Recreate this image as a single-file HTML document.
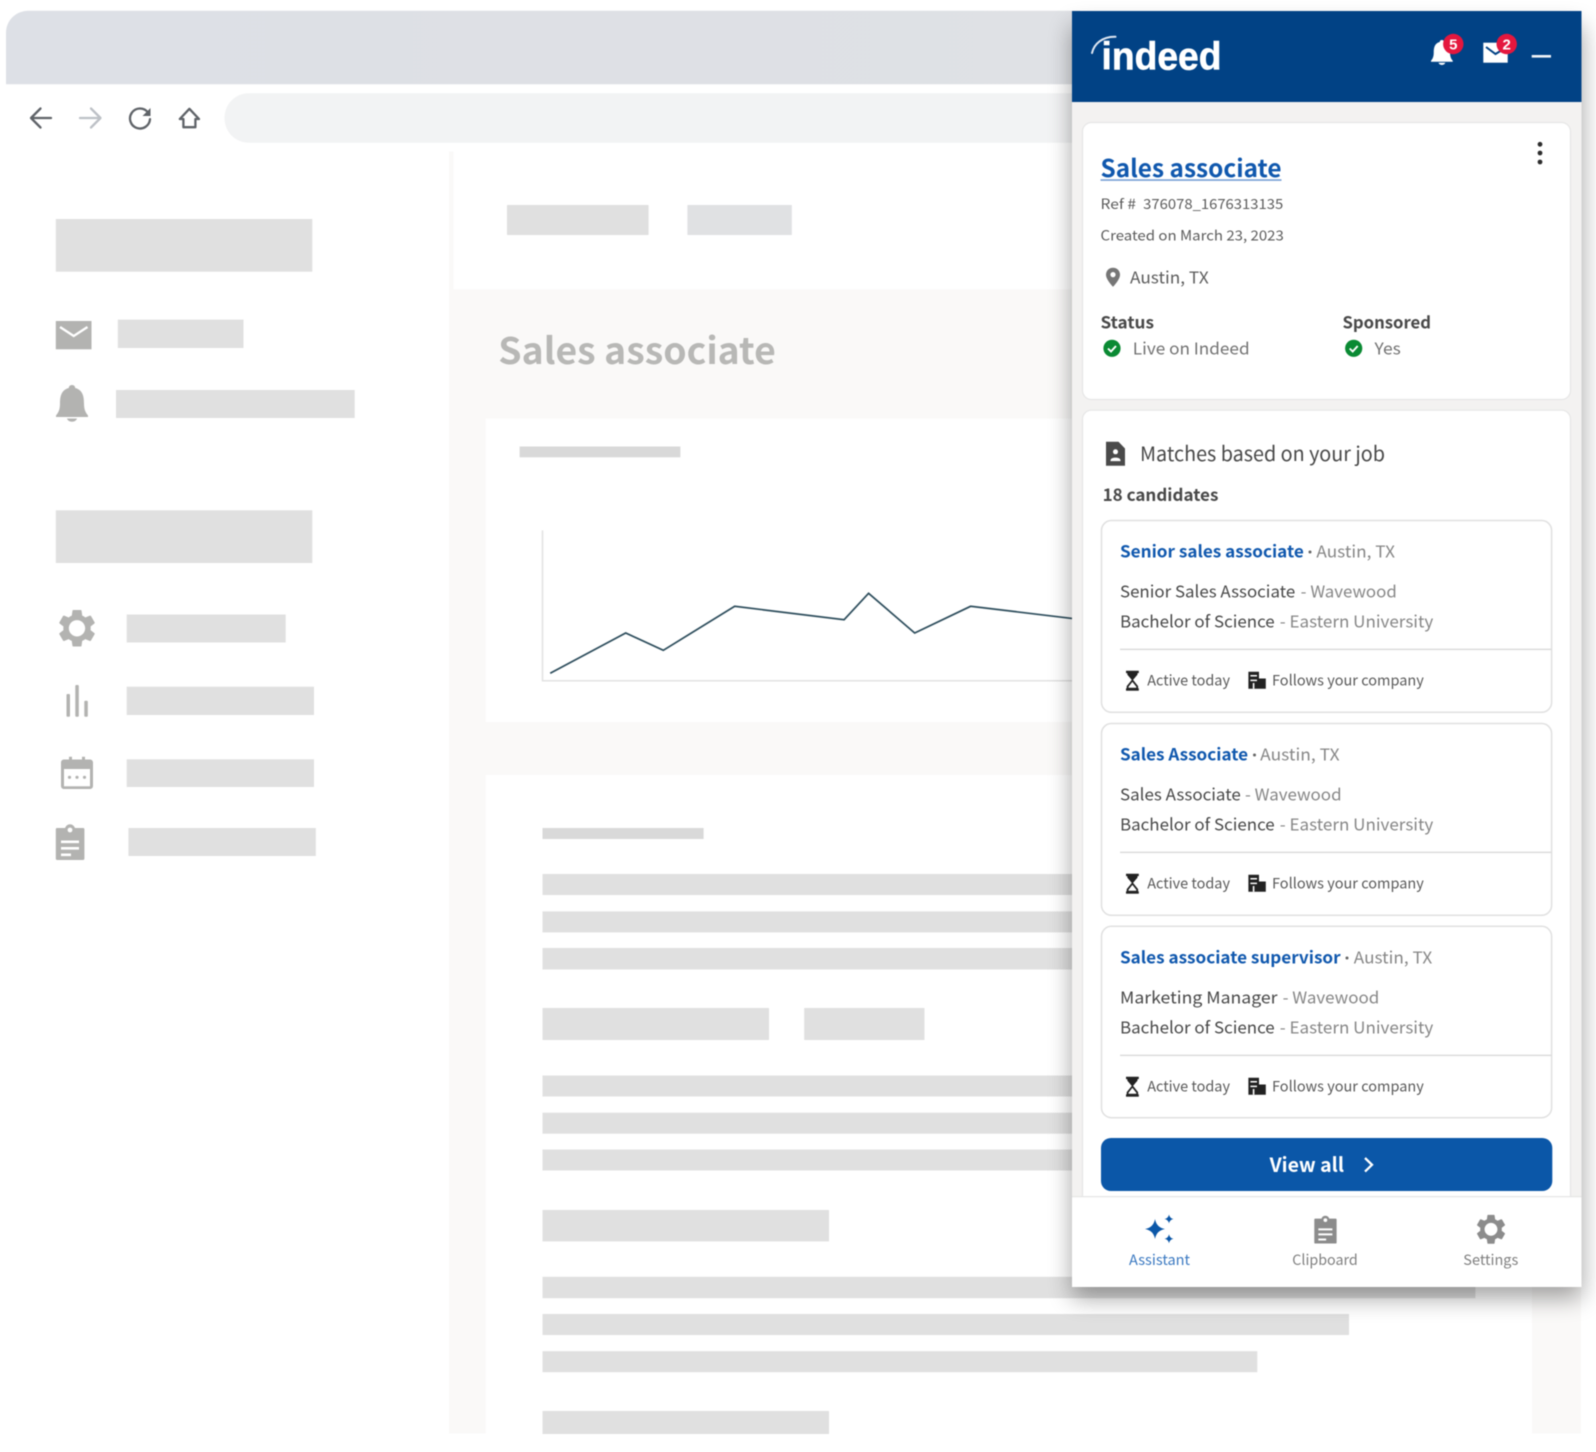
<!DOCTYPE html>
<html lang="en">
<head>
<meta charset="utf-8">
<title>Indeed assistant</title>
<style>
html,body{margin:0;padding:0;background:#fff;width:1596px;height:1452px;overflow:hidden}
svg{display:block;filter:blur(.5px)}
text{font-family:"Noto Sans CJK JP","Liberation Sans",sans-serif;white-space:pre}
.b{font-weight:700}
.k{fill:#484848}
.g{fill:#868686}
.l{fill:#1058ae;font-weight:700}
.s{fill:#5a5a5a;font-size:14.5px}
.m{font-size:16.5px}
</style>
</head>
<body>
<svg xmlns="http://www.w3.org/2000/svg" width="1596" height="1452" viewBox="0 0 1596 1452">
<defs>
<linearGradient id="tb" x1="0" x2="1" y1="0" y2="0"><stop offset="0" stop-color="#dde0e6"/><stop offset="1" stop-color="#dfe1e5"/></linearGradient>
<filter id="sh" x="-20%" y="-10%" width="140%" height="120%"><feGaussianBlur stdDeviation="12"/></filter>
<path id="gear" fill-rule="evenodd" d="M19.14 12.94c.04-.3.06-.61.06-.94 0-.32-.02-.64-.07-.94l2.03-1.58c.18-.14.23-.41.12-.61l-1.92-3.32c-.12-.22-.37-.29-.59-.22l-2.39.96c-.5-.38-1.03-.7-1.62-.94l-.36-2.54c-.04-.24-.24-.41-.48-.41h-3.84c-.24 0-.43.17-.47.41l-.36 2.54c-.59.24-1.13.57-1.62.94l-2.39-.96c-.22-.08-.47 0-.59.22L2.74 8.87c-.12.21-.08.47.12.61l2.03 1.58c-.05.3-.09.63-.09.94s.02.64.07.94l-2.03 1.58c-.18.14-.23.41-.12.61l1.92 3.32c.12.22.37.29.59.22l2.39-.96c.5.38 1.03.7 1.62.94l.36 2.54c.05.24.24.41.48.41h3.84c.24 0 .44-.17.47-.41l.36-2.54c.59-.24 1.13-.56 1.62-.94l2.39.96c.22.08.47 0 .59-.22l1.92-3.32c.12-.22.07-.47-.12-.61l-2.01-1.58zM12 16.3c-2.37 0-4.3-1.93-4.3-4.3s1.93-4.3 4.3-4.3 4.3 1.93 4.3 4.3-1.93 4.3-4.3 4.3z"/>
<g id="bell"><path d="M72 385c-2 0-3.2 1.4-3.2 3C61 390 60 397 60 403.5c0 6-1.6 9.2-4 12v1.5h32v-1.5c-2.4-2.8-4-6-4-12 0-6.500-1-13.500-8.800-15.500 0-1.600-1.200-3-3.200-3z"/><path d="M67 418.500h10c-.6 2-2.600 3.200-5 3.200s-4.400-1.200-5-3.200z"/></g>
<g id="clip"><rect x="55.800" y="828" width="28.600" height="32" rx="1.200"/><circle cx="70" cy="829.500" r="5.200"/><circle cx="70" cy="830" r="2.400" fill="#fff"/><path d="M61 840.500h18v2.600H61zM61 847h18v2.600H61zM61 853.500h10v2.600H61z" fill="#fff"/></g>
<g id="foot"><path d="M1126 670.700h12.800v2.400h-1.300v1.500l-5.100 6-5.100-6v-1.500H1126z" fill="#222"/><path d="M1132.400 680.500l-4.800 6v2.200h9.600v-2.200z" fill="none" stroke="#222" stroke-width="1.800"/><path d="M1126 688.300h12.800v2.400H1126z" fill="#222"/><path d="M1248.400 671.800h10.600v6.700h6.800v10.200h-17.400z" fill="#222"/><path d="M1250.400 675h6.600v1.500h-6.600zM1250.400 679.600h6.600v1.500h-6.600zM1252.800 683h1.600v5.700h-1.600z" fill="#fff"/></g>
</defs>

<!-- browser chrome -->
<path d="M6 84.300V33C6 20 16 10.700 29 10.700H1080V84.300z" fill="url(#tb)"/>
<path d="M249 93.300H1080V142.700H249c-14 0-24.500-11-24.500-24.700S235 93.300 249 93.300z" fill="#f2f3f4"/>
<g fill="none" stroke-width="2.300" stroke-linecap="round" stroke-linejoin="round">
<path d="M51 118H31.500M40.500 108.500L31 118l9.500 9.500" stroke="#5f6368"/>
<path d="M80 118h20M91 108.500l9.500 9.500-9.500 9.500" stroke="#bdc1c6"/>
<path d="M147.800 112.200a10 10 0 1 0 2.200 7" stroke="#5f6368"/>
<path d="M189.400 108.800l9.600 10.200h-3.600v8.200h-12v-8.200h-3.600z" stroke="#5f6368"/>
</g>
<path d="M150.500 108v8h-8z" fill="#5f6368"/>

<!-- main background -->
<rect x="449" y="151.500" width="1132" height="1282" fill="#faf9f8"/>
<rect x="453.500" y="151.500" width="1128" height="137.800" fill="#fff"/>
<rect x="485.700" y="418.600" width="1046.300" height="303.400" fill="#fff"/>
<rect x="485.700" y="775" width="1046.300" height="659" fill="#fff"/>

<!-- sidebar -->
<g fill="#e0e0e0">
<rect x="55.800" y="219" width="256.500" height="52.700"/>
<rect x="117.800" y="319.600" width="125.700" height="28.400"/>
<rect x="116" y="390" width="238.700" height="28"/>
<rect x="55.800" y="510.300" width="256.500" height="52.700"/>
<rect x="126.700" y="614.500" width="159" height="28"/>
<rect x="126.700" y="686.700" width="187.300" height="28.300"/>
<rect x="126.700" y="759.300" width="187.300" height="27.700"/>
<rect x="128.400" y="828" width="187.400" height="28"/>
</g>
<g fill="#b3b3b1">
<rect x="55.800" y="321" width="35.700" height="28.300"/>
<use href="#bell"/>
<use href="#gear" transform="translate(77 628.300) scale(1.900) translate(-12 -12)"/>
<rect x="66.500" y="694" width="3.500" height="22.700" rx="1"/>
<rect x="75.300" y="685" width="3.500" height="31.700" rx="1"/>
<rect x="84.300" y="700.700" width="3.500" height="16" rx="1"/>
<path d="M64 759.500h5v-2.800h3v2.800h10v-2.800h3v2.800h5c1.700 0 3 1.300 3 3V786c0 1.700-1.300 3-3 3H64c-1.700 0-3-1.300-3-3v-23.500c0-1.700 1.300-3 3-3z"/>
<use href="#clip"/>
</g>
<path d="M60 327l13.700 9 13.800-9" fill="none" stroke="#fff" stroke-width="2.300"/>
<rect x="64" y="769" width="26" height="17.300" fill="#fff"/>
<g fill="#b3b3b1"><circle cx="69.500" cy="777.300" r="1.600"/><circle cx="77" cy="777.300" r="1.600"/><circle cx="84.500" cy="777.300" r="1.600"/></g>

<!-- main content -->
<rect x="507" y="205" width="141.600" height="30" fill="#e0e0e0"/>
<rect x="687.400" y="205" width="104.400" height="30" fill="#e0e1e3"/>
<text x="498.300" y="364" font-size="36.500" class="b" fill="#b8b8b6" textLength="277.500" lengthAdjust="spacingAndGlyphs">Sales associate</text>
<rect x="519.600" y="446.500" width="160.800" height="10.800" fill="#d9d9d9"/>
<path d="M542.500 530.400V680.800H1080" fill="none" stroke="#e2e2e2" stroke-width="1.500"/>
<polyline points="550.200,673.300 625.700,633 663.300,650.300 734.700,606.300 844.100,619.700 868.600,593.300 914.700,633 970.600,606.300 1075,618.800" fill="none" stroke="#2d4d5c" stroke-width="1.700"/>
<g fill="#e0e0e0">
<rect x="542.500" y="828" width="161.100" height="11" fill="#d9d9d9"/>
<rect x="542.500" y="874" width="540" height="21"/>
<rect x="542.500" y="911.400" width="540" height="21"/>
<rect x="542.500" y="948" width="540" height="21.500"/>
<rect x="542.500" y="1008" width="226.500" height="32"/>
<rect x="804.200" y="1008" width="120.300" height="32"/>
<rect x="542.500" y="1075.500" width="540" height="21"/>
<rect x="542.500" y="1112.700" width="540" height="21"/>
<rect x="542.500" y="1149.500" width="540" height="21"/>
<rect x="542.500" y="1210" width="286.500" height="31.400"/>
<rect x="542.500" y="1276.800" width="932.900" height="21.400"/>
<rect x="542.500" y="1314" width="806.500" height="21"/>
<rect x="542.500" y="1351.200" width="714.800" height="21"/>
<rect x="542.500" y="1411" width="286.500" height="23"/>
</g>

<!-- panel -->
<rect x="1072" y="26" width="510" height="1272" fill="#000" opacity=".36" filter="url(#sh)"/>
<rect x="1072" y="11" width="509.500" height="1276" fill="#f3f2f1"/>
<rect x="1072" y="11" width="509.500" height="91" fill="#014285"/>
<text x="1101.500" y="69.300" font-size="39" fill="#fff" stroke="#fff" stroke-width=".6" style="font-family:'Liberation Sans',sans-serif;font-weight:700" textLength="120" lengthAdjust="spacingAndGlyphs">indeed</text>
<path d="M1092 53c2-9 10-16.500 23.500-16.200" fill="none" stroke="#dfe7f2" stroke-width="2" stroke-linecap="round"/>

<g transform="translate(1431 40) scale(.68) translate(-56 -385)" fill="#fff"><use href="#bell"/></g>
<circle cx="1453.300" cy="44" r="10.200" fill="#e4173e"/>
<text x="1453.300" y="49.300" font-size="15" text-anchor="middle" fill="#fff" style="font-family:'Liberation Sans',sans-serif;font-weight:700">5</text>
<rect x="1483.300" y="42.700" width="24.400" height="20" fill="#fff"/>
<path d="M1486 47l9.500 7 9-5.500" fill="none" stroke="#014285" stroke-width="2"/>
<circle cx="1506.700" cy="44" r="10.200" fill="#e4173e"/>
<text x="1506.700" y="49.300" font-size="15" text-anchor="middle" fill="#fff" style="font-family:'Liberation Sans',sans-serif;font-weight:700">2</text>
<rect x="1531.700" y="55" width="19.300" height="2.600" fill="#f0f3f8"/>

<!-- job card -->
<rect x="1082.500" y="122.500" width="488" height="277" rx="9" fill="#fff" stroke="#e6e6e6" stroke-width="1.200"/>
<g fill="#2d2d2d"><circle cx="1540" cy="144.300" r="2.400"/><circle cx="1540" cy="153" r="2.400"/><circle cx="1540" cy="162" r="2.400"/></g>
<text x="1100.500" y="177" font-size="24.500" class="b" fill="#1058ae" textLength="181" lengthAdjust="spacingAndGlyphs">Sales associate</text>
<rect x="1100.500" y="179.300" width="181" height="1.500" fill="#6f9ad3"/>
<text x="1100.500" y="209" font-size="14" fill="#5c5c5c" textLength="35.500" lengthAdjust="spacingAndGlyphs">Ref #</text>
<text x="1143.200" y="209" font-size="14" fill="#5c5c5c" textLength="140" lengthAdjust="spacingAndGlyphs">376078_1676313135</text>
<text x="1100.500" y="240.300" font-size="14" fill="#5c5c5c" textLength="183.300" lengthAdjust="spacingAndGlyphs">Created on March 23, 2023</text>
<path d="M1113 267.700c-4 0-7 3-7 7 0 5 7 12 7 12s7-7 7-12c0-4-3-7-7-7z" fill="#767676"/><circle cx="1113" cy="274.600" r="2.600" fill="#fff"/>
<text x="1130" y="283.300" font-size="16.500" fill="#5c5c5c" textLength="78.700" lengthAdjust="spacingAndGlyphs">Austin, TX</text>
<text x="1100.500" y="328.300" font-size="16.500" class="b k" textLength="53.500" lengthAdjust="spacingAndGlyphs">Status</text>
<text x="1342.500" y="328.300" font-size="16.500" class="b k" textLength="88.500" lengthAdjust="spacingAndGlyphs">Sponsored</text>
<circle cx="1112" cy="348.300" r="8.600" fill="#0a8a33"/><path d="M1108 348.500l3 3 5-5.500" fill="none" stroke="#fff" stroke-width="1.900"/>
<circle cx="1353.700" cy="348.300" r="8.600" fill="#0a8a33"/><path d="M1349.700 348.500l3 3 5-5.500" fill="none" stroke="#fff" stroke-width="1.900"/>
<text x="1132.800" y="354.300" font-size="16.500" fill="#727272" textLength="116.800" lengthAdjust="spacingAndGlyphs">Live on Indeed</text>
<text x="1374.500" y="354.300" font-size="16.500" fill="#727272" textLength="26.300" lengthAdjust="spacingAndGlyphs">Yes</text>

<!-- matches card -->
<path d="M1082.500 1197V419.200c0-5 4-9 9-9h470c5 0 9 4 9 9V1197z" fill="#fff" stroke="#e6e6e6" stroke-width="1.200"/>
<path d="M1106 441.700h12.500l6.500 6.800v17.200h-19z" fill="#4a4a4a"/>
<circle cx="1115.500" cy="451.800" r="2.500" fill="#fff"/><path d="M1110.500 460.300c0-3.600 10-3.600 10 0v.8h-10z" fill="#fff"/>
<text x="1140" y="461" font-size="20" fill="#484848" textLength="245" lengthAdjust="spacingAndGlyphs">Matches based on your job</text>
<text x="1102.600" y="501" font-size="17" class="b k" textLength="115.800" lengthAdjust="spacingAndGlyphs">18 candidates</text>

<!-- candidates -->
<g fill="#fff" stroke="#e0e0e0" stroke-width="1.500">
<rect x="1101.500" y="520.500" width="450.100" height="191.800" rx="10"/>
<rect x="1101.500" y="723.500" width="450.100" height="191.800" rx="10"/>
<rect x="1101.500" y="926.300" width="450.100" height="191.400" rx="10"/>
</g>
<g fill="#dcdcdc">
<rect x="1120" y="648.600" width="431.500" height="1.500"/>
<rect x="1120" y="851.600" width="431.500" height="1.500"/>
<rect x="1120" y="1054.600" width="431.500" height="1.500"/>
</g>
<use href="#foot"/><use href="#foot" y="203"/><use href="#foot" y="406"/>

<text x="1120" y="557.300" class="l m" textLength="183.800" lengthAdjust="spacingAndGlyphs">Senior sales associate</text>
<circle cx="1310" cy="552" r="1.500" fill="#666"/>
<text x="1316.400" y="557.300" class="g m" textLength="78.600" lengthAdjust="spacingAndGlyphs">Austin, TX</text>
<text x="1120" y="597.300" class="k m" textLength="175.200" lengthAdjust="spacingAndGlyphs">Senior Sales Associate</text>
<text x="1300.700" y="597.300" class="g m" textLength="96.100" lengthAdjust="spacingAndGlyphs">- Wavewood</text>
<text x="1120" y="627.300" class="k m" textLength="154.700" lengthAdjust="spacingAndGlyphs">Bachelor of Science</text>
<text x="1279.800" y="627.300" class="g m" textLength="153.500" lengthAdjust="spacingAndGlyphs">- Eastern University</text>
<text x="1147.200" y="685.300" class="s" textLength="82.800" lengthAdjust="spacingAndGlyphs">Active today</text>
<text x="1272" y="685.300" class="s" textLength="151.800" lengthAdjust="spacingAndGlyphs">Follows your company</text>

<text x="1120" y="760.300" class="l m" textLength="128" lengthAdjust="spacingAndGlyphs">Sales Associate</text>
<circle cx="1254.500" cy="755" r="1.500" fill="#666"/>
<text x="1260.200" y="760.300" class="g m" textLength="79.400" lengthAdjust="spacingAndGlyphs">Austin, TX</text>
<text x="1120" y="800.300" class="k m" textLength="120.800" lengthAdjust="spacingAndGlyphs">Sales Associate</text>
<text x="1245" y="800.300" class="g m" textLength="96.600" lengthAdjust="spacingAndGlyphs">- Wavewood</text>
<text x="1120" y="830.300" class="k m" textLength="154.700" lengthAdjust="spacingAndGlyphs">Bachelor of Science</text>
<text x="1279.800" y="830.300" class="g m" textLength="153.500" lengthAdjust="spacingAndGlyphs">- Eastern University</text>
<text x="1147.200" y="888.300" class="s" textLength="82.800" lengthAdjust="spacingAndGlyphs">Active today</text>
<text x="1272" y="888.300" class="s" textLength="151.800" lengthAdjust="spacingAndGlyphs">Follows your company</text>

<text x="1120" y="963.300" class="l m" textLength="220.600" lengthAdjust="spacingAndGlyphs">Sales associate supervisor</text>
<circle cx="1347" cy="958" r="1.500" fill="#666"/>
<text x="1353.800" y="963.300" class="g m" textLength="78.400" lengthAdjust="spacingAndGlyphs">Austin, TX</text>
<text x="1120" y="1003.300" class="k m" textLength="157.500" lengthAdjust="spacingAndGlyphs">Marketing Manager</text>
<text x="1282.600" y="1003.300" class="g m" textLength="96.700" lengthAdjust="spacingAndGlyphs">- Wavewood</text>
<text x="1120" y="1033.300" class="k m" textLength="154.700" lengthAdjust="spacingAndGlyphs">Bachelor of Science</text>
<text x="1279.800" y="1033.300" class="g m" textLength="153.500" lengthAdjust="spacingAndGlyphs">- Eastern University</text>
<text x="1147.200" y="1091.300" class="s" textLength="82.800" lengthAdjust="spacingAndGlyphs">Active today</text>
<text x="1272" y="1091.300" class="s" textLength="151.800" lengthAdjust="spacingAndGlyphs">Follows your company</text>

<!-- view all -->
<rect x="1101" y="1138" width="451.300" height="53" rx="10" fill="#0b57a8"/>
<text x="1269.600" y="1172.200" font-size="19.500" class="b" fill="#fff" textLength="74.400" lengthAdjust="spacingAndGlyphs">View all</text>
<path d="M1365 1158l7 6.800-7 6.800" fill="none" stroke="#fff" stroke-width="2.300"/>

<!-- bottom nav -->
<rect x="1072" y="1196" width="509.500" height="1.500" fill="#e6e6e6"/>
<rect x="1072" y="1197.300" width="509.500" height="89.700" fill="#fff"/>
<path d="M1155 1219q1.500 8.500 10 10q-8.500 1.500-10 10q-1.500-8.500-10-10q8.500-1.500 10-10zM1169 1214.500q.7 3.800 4.500 4.500q-3.800.7-4.500 4.500q-.7-3.800-4.500-4.500q3.800-.7 4.500-4.500zM1169 1234.200q.7 3.800 4.500 4.500q-3.800.7-4.500 4.500q-.7-3.800-4.500-4.500q3.800-.7 4.500-4.500z" fill="#0b57a8"/>
<text x="1129" y="1265" font-size="14.500" fill="#3b79c1" textLength="61" lengthAdjust="spacingAndGlyphs">Assistant</text>
<g transform="translate(1314.300 1215.700) scale(.78) translate(-55.800 -824.300)" fill="#8c8c8c"><use href="#clip"/></g>
<text x="1292.300" y="1265" font-size="14.500" fill="#808080" textLength="65.400" lengthAdjust="spacingAndGlyphs">Clipboard</text>
<use href="#gear" fill="#8c8c8c" transform="translate(1491 1229.300) scale(1.500) translate(-12 -12)"/>
<text x="1463.300" y="1265" font-size="14.500" fill="#808080" textLength="55" lengthAdjust="spacingAndGlyphs">Settings</text>
</svg>
</body>
</html>
